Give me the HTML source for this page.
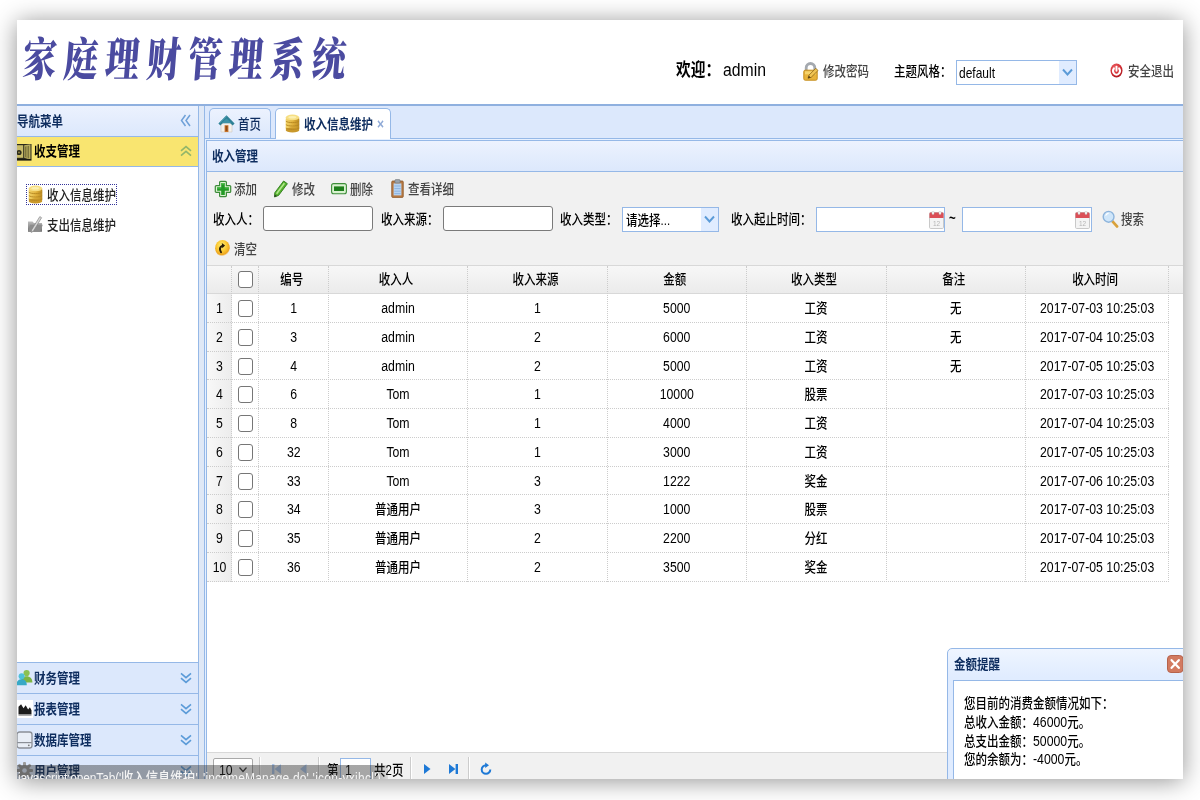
<!DOCTYPE html>
<html lang="zh-CN">
<head>
<meta charset="utf-8">
<title>家庭理财管理系统</title>
<style>
*{box-sizing:border-box;margin:0;padding:0}
html,body{width:1200px;height:800px;overflow:hidden;background:#fff}
body{font-family:"Liberation Sans","Noto Sans CJK SC",sans-serif;font-size:11.5px;color:#000;position:relative;font-weight:500}
#w{position:absolute;left:17px;top:20px;width:1166px;height:759px;overflow:hidden;background:#fff;
   box-shadow:0 2px 23px rgba(0,0,0,.43)}
#p{position:absolute;left:-17px;top:-20px;width:1200px;height:800px;will-change:transform}
.a{position:absolute;white-space:nowrap}
.t{position:absolute;white-space:nowrap;line-height:20px;height:20px;transform:scaleY(1.2)}
.b{font-weight:bold}
.nav{color:#0E2D5F;font-weight:bold}
/* title */
#title{left:23px;top:29px;font-family:"Noto Serif CJK SC","Liberation Serif",serif;font-weight:900;font-size:34px;line-height:56px;letter-spacing:7.3px;color:#4B4BA0;transform-origin:0 50%;transform:scaleY(1.36) skewX(-6deg)}
/* panels */
.hdr{background:linear-gradient(#ECF2FE,#DCE8FC);border:1px solid #95B8E7}
.acc{position:absolute;left:17px;width:182px;height:32px;background:#DCE8FC;border-top:1px solid #95B8E7;border-right:1px solid #95B8E7}
.acc .t{left:17px;top:5px;color:#0E2D5F;font-weight:bold}
.vline{position:absolute;width:1px;background:#95B8E7}
.hline{position:absolute;height:1px;background:#95B8E7}
/* table */
.th,.td{position:absolute;text-align:center;white-space:nowrap;transform:scaleY(1.2)}
.row{position:absolute;left:207px;width:962px;height:28.78px;border-bottom:1px dotted #ccc}
.row span{position:absolute;top:0;height:28px;line-height:29px;text-align:center;transform:scaleY(1.2)}
.row .n{font-size:12.3px}
.cb{position:absolute;width:15px;height:17px;border:1px solid #767676;border-radius:3px;background:#fff}
.vd{position:absolute;width:0;border-left:1px dotted #ccc}
.inp{position:absolute;background:#fff;border:1px solid #7a7a7a;border-radius:3px}
.combo{position:absolute;background:#fff;border:1px solid #95B8E7}
.l{font-size:12.3px}
.sep{position:absolute;width:0;height:25px;border-left:1px solid #ccc;border-right:1px solid #fff}
</style>
</head>
<body>
<div id="w"><div id="p">

<!-- ===== north header ===== -->
<div id="title" class="a">家庭理财管理系统</div>
<div class="t b" style="left:676px;top:60px;font-size:14.7px">欢迎：</div>
<div class="t" style="left:723px;top:60px;font-size:15.8px">admin</div>
<div class="t" style="left:823px;top:61px;font-size:11.5px;color:#444">修改密码</div>
<div class="t" style="left:894px;top:61px;font-size:11.5px">主题风格：</div>
<div class="combo" style="left:956px;top:60px;width:121px;height:25px"><div class="t" style="left:2px;top:2px;font-size:12px">default</div><div class="a" style="right:0;top:0;width:17px;height:23px;background:#E0ECFF"></div></div>
<div class="t" style="left:1128px;top:61px;font-size:11.5px;color:#444">安全退出</div>

<!-- ===== layout frame ===== -->
<div class="hline" style="left:17px;top:104px;width:1166px;height:2px;background:#8FB0DF;z-index:3"></div>

<!-- west -->
<div class="a hdr" style="left:16px;top:104px;width:183px;height:33px"><div class="t nav" style="left:0;top:6px">导航菜单</div></div>
<div class="a" style="left:17px;top:137px;width:182px;height:30px;background:#F9E570;border-right:1px solid #95B8E7;border-bottom:1px solid #95B8E7"><div class="t nav" style="left:17px;top:4px;color:#000">收支管理</div></div>
<div class="vline" style="left:198px;top:167px;height:496px"></div>
<div class="a" style="left:26px;top:184px;width:91px;height:21px;border:1px dotted #339"></div>
<div class="t" style="left:47px;top:184.5px;font-size:11.5px;color:#222">收入信息维护</div>
<div class="t" style="left:47px;top:214.5px;font-size:11.5px;color:#222">支出信息维护</div>

<div class="acc" style="top:662px"><div class="t">财务管理</div></div>
<div class="acc" style="top:693px"><div class="t">报表管理</div></div>
<div class="acc" style="top:724px"><div class="t">数据库管理</div></div>
<div class="acc" style="top:755px"><div class="t">用户管理</div></div>

<!-- split -->
<div class="a" style="left:199px;top:105px;width:5px;height:700px;background:#DFE8F6"></div>
<div class="vline" style="left:204px;top:105px;height:700px"></div>

<!-- ===== center: tabs ===== -->
<div class="a" style="left:205px;top:105px;width:981px;height:34px;background:#DCE8FC;border-bottom:1px solid #95B8E7"></div>
<div class="a" style="left:209px;top:108px;width:62px;height:30px;border:1px solid #95B8E7;border-bottom:none;border-radius:5px 5px 0 0;background:linear-gradient(#ECF2FE,#DCE8FC)"><div class="t" style="left:28px;top:5px;color:#0E2D5F">首页</div></div>
<div class="a" style="left:275px;top:108px;width:116px;height:32px;border:1px solid #95B8E7;border-bottom:none;border-radius:5px 5px 0 0;background:#fff"><div class="t nav" style="left:28px;top:5px">收入信息维护</div><div class="t b" style="left:101px;top:5px;color:#8ea9d6;font-size:12px">×</div></div>

<div class="a" style="left:205px;top:139px;width:981px;height:2px;background:#E6F0FF"></div>
<div class="a" style="left:205px;top:139px;width:1px;height:700px;background:#E6F0FF"></div>
<!-- panel header -->
<div class="a hdr" style="left:206px;top:140px;width:980px;height:32px"><div class="t nav" style="left:5px;top:5px">收入管理</div></div>
<div class="vline" style="left:206px;top:172px;height:640px"></div>

<!-- toolbar -->
<div class="a" style="left:207px;top:172px;width:976px;height:94px;background:#F1F1F1;border-bottom:1px solid #d8d8d8"></div>
<div class="t" style="left:234px;top:179px;color:#444">添加</div>
<div class="t" style="left:292px;top:179px;color:#444">修改</div>
<div class="t" style="left:350px;top:179px;color:#444">删除</div>
<div class="t" style="left:408px;top:179px;color:#444">查看详细</div>
<div class="t" style="left:213px;top:209px">收入人：</div>
<div class="inp" style="left:263px;top:206px;width:110px;height:25px"></div>
<div class="t" style="left:381px;top:209px">收入来源：</div>
<div class="inp" style="left:443px;top:206px;width:110px;height:25px"></div>
<div class="t" style="left:560px;top:209px">收入类型：</div>
<div class="combo" style="left:622px;top:207px;width:97px;height:25px"><div class="t" style="left:3px;top:2px">请选择...</div><div class="a" style="right:0;top:0;width:17px;height:23px;background:#E0ECFF"></div></div>
<div class="t" style="left:731px;top:209px">收入起止时间：</div>
<div class="combo" style="left:816px;top:207px;width:129px;height:25px"></div>
<div class="t b" style="left:949px;top:208px">~</div>
<div class="combo" style="left:962px;top:207px;width:130px;height:25px"></div>
<div class="t" style="left:1121px;top:209px;color:#444">搜索</div>
<div class="t" style="left:234px;top:239px;color:#444">清空</div>

<!-- grid header -->
<div class="a" id="gh" style="left:207px;top:266px;width:976px;height:28px;background:linear-gradient(#F7F7F7,#EBEBEB);border-bottom:1px solid #d8d8d8"></div>
<div class="a" style="left:207px;top:294px;width:25px;height:288px;background:linear-gradient(90deg,#F8F8F8,#ECECEC)"></div>

<!-- ===== grid ===== -->
<div class="th" style="left:257px;top:265px;width:69.5px;height:29px;line-height:29px">编号</div>
<div class="th" style="left:326.5px;top:265px;width:139.0px;height:29px;line-height:29px">收入人</div>
<div class="th" style="left:465.5px;top:265px;width:140.0px;height:29px;line-height:29px">收入来源</div>
<div class="th" style="left:605.5px;top:265px;width:138.5px;height:29px;line-height:29px">金额</div>
<div class="th" style="left:744px;top:265px;width:140px;height:29px;line-height:29px">收入类型</div>
<div class="th" style="left:884px;top:265px;width:139.5px;height:29px;line-height:29px">备注</div>
<div class="th" style="left:1023.5px;top:265px;width:143.25px;height:29px;line-height:29px">收入时间</div>
<div class="cb" style="left:238px;top:271px"></div>
<div class="row" style="top:294.00px"><span class="n" style="left:0;width:25px">1</span><i class="cb" style="left:31px;top:6px"></i><span class="n" style="left:52px;width:69.5px">1</span><span class="n" style="left:121.5px;width:139.0px">admin</span><span class="n" style="left:260.5px;width:140.0px">1</span><span class="n" style="left:400.5px;width:138.5px">5000</span><span class="c" style="left:539px;width:140px">工资</span><span class="c" style="left:679px;width:139.5px">无</span><span class="n" style="left:818.5px;width:143.25px">2017-07-03 10:25:03</span></div>
<div class="row" style="top:322.78px"><span class="n" style="left:0;width:25px">2</span><i class="cb" style="left:31px;top:6px"></i><span class="n" style="left:52px;width:69.5px">3</span><span class="n" style="left:121.5px;width:139.0px">admin</span><span class="n" style="left:260.5px;width:140.0px">2</span><span class="n" style="left:400.5px;width:138.5px">6000</span><span class="c" style="left:539px;width:140px">工资</span><span class="c" style="left:679px;width:139.5px">无</span><span class="n" style="left:818.5px;width:143.25px">2017-07-04 10:25:03</span></div>
<div class="row" style="top:351.56px"><span class="n" style="left:0;width:25px">3</span><i class="cb" style="left:31px;top:6px"></i><span class="n" style="left:52px;width:69.5px">4</span><span class="n" style="left:121.5px;width:139.0px">admin</span><span class="n" style="left:260.5px;width:140.0px">2</span><span class="n" style="left:400.5px;width:138.5px">5000</span><span class="c" style="left:539px;width:140px">工资</span><span class="c" style="left:679px;width:139.5px">无</span><span class="n" style="left:818.5px;width:143.25px">2017-07-05 10:25:03</span></div>
<div class="row" style="top:380.34px"><span class="n" style="left:0;width:25px">4</span><i class="cb" style="left:31px;top:6px"></i><span class="n" style="left:52px;width:69.5px">6</span><span class="n" style="left:121.5px;width:139.0px">Tom</span><span class="n" style="left:260.5px;width:140.0px">1</span><span class="n" style="left:400.5px;width:138.5px">10000</span><span class="c" style="left:539px;width:140px">股票</span><span class="n" style="left:818.5px;width:143.25px">2017-07-03 10:25:03</span></div>
<div class="row" style="top:409.12px"><span class="n" style="left:0;width:25px">5</span><i class="cb" style="left:31px;top:6px"></i><span class="n" style="left:52px;width:69.5px">8</span><span class="n" style="left:121.5px;width:139.0px">Tom</span><span class="n" style="left:260.5px;width:140.0px">1</span><span class="n" style="left:400.5px;width:138.5px">4000</span><span class="c" style="left:539px;width:140px">工资</span><span class="n" style="left:818.5px;width:143.25px">2017-07-04 10:25:03</span></div>
<div class="row" style="top:437.90px"><span class="n" style="left:0;width:25px">6</span><i class="cb" style="left:31px;top:6px"></i><span class="n" style="left:52px;width:69.5px">32</span><span class="n" style="left:121.5px;width:139.0px">Tom</span><span class="n" style="left:260.5px;width:140.0px">1</span><span class="n" style="left:400.5px;width:138.5px">3000</span><span class="c" style="left:539px;width:140px">工资</span><span class="n" style="left:818.5px;width:143.25px">2017-07-05 10:25:03</span></div>
<div class="row" style="top:466.68px"><span class="n" style="left:0;width:25px">7</span><i class="cb" style="left:31px;top:6px"></i><span class="n" style="left:52px;width:69.5px">33</span><span class="n" style="left:121.5px;width:139.0px">Tom</span><span class="n" style="left:260.5px;width:140.0px">3</span><span class="n" style="left:400.5px;width:138.5px">1222</span><span class="c" style="left:539px;width:140px">奖金</span><span class="n" style="left:818.5px;width:143.25px">2017-07-06 10:25:03</span></div>
<div class="row" style="top:495.46px"><span class="n" style="left:0;width:25px">8</span><i class="cb" style="left:31px;top:6px"></i><span class="n" style="left:52px;width:69.5px">34</span><span class="c" style="left:121.5px;width:139.0px">普通用户</span><span class="n" style="left:260.5px;width:140.0px">3</span><span class="n" style="left:400.5px;width:138.5px">1000</span><span class="c" style="left:539px;width:140px">股票</span><span class="n" style="left:818.5px;width:143.25px">2017-07-03 10:25:03</span></div>
<div class="row" style="top:524.24px"><span class="n" style="left:0;width:25px">9</span><i class="cb" style="left:31px;top:6px"></i><span class="n" style="left:52px;width:69.5px">35</span><span class="c" style="left:121.5px;width:139.0px">普通用户</span><span class="n" style="left:260.5px;width:140.0px">2</span><span class="n" style="left:400.5px;width:138.5px">2200</span><span class="c" style="left:539px;width:140px">分红</span><span class="n" style="left:818.5px;width:143.25px">2017-07-04 10:25:03</span></div>
<div class="row" style="top:553.02px"><span class="n" style="left:0;width:25px">10</span><i class="cb" style="left:31px;top:6px"></i><span class="n" style="left:52px;width:69.5px">36</span><span class="c" style="left:121.5px;width:139.0px">普通用户</span><span class="n" style="left:260.5px;width:140.0px">2</span><span class="n" style="left:400.5px;width:138.5px">3500</span><span class="c" style="left:539px;width:140px">奖金</span><span class="n" style="left:818.5px;width:143.25px">2017-07-05 10:25:03</span></div>
<div class="vd" style="left:231px;top:266px;height:316px"></div>
<div class="vd" style="left:258px;top:266px;height:316px"></div>
<div class="vd" style="left:328px;top:266px;height:316px"></div>
<div class="vd" style="left:467px;top:266px;height:316px"></div>
<div class="vd" style="left:607px;top:266px;height:316px"></div>
<div class="vd" style="left:746px;top:266px;height:316px"></div>
<div class="vd" style="left:886px;top:266px;height:316px"></div>
<div class="vd" style="left:1025px;top:266px;height:316px"></div>
<div class="vd" style="left:1168px;top:266px;height:316px"></div>
<!-- ===== icons ===== -->
<svg class="a" style="left:803px;top:62px" width="17" height="19" viewBox="0 0 17 19"><path d="M3.2 9V5.8a4.3 4.3 0 0 1 8.6 0V9" fill="none" stroke="#A4A9AF" stroke-width="2.8"/><rect x=".8" y="8.2" width="13.4" height="10" rx="1.4" fill="#E8B33A" stroke="#C58E1F"/><rect x="2" y="9.3" width="11" height="3" fill="#F6D46C"/><path d="M5 16.3l1-3.2 6.8-6.8 2.2 2.2-6.8 6.8z" fill="#F1C453" stroke="#8C6414" stroke-width=".8"/><path d="M5 16.3l.9-2.6 1.8 1.8z" fill="#4A3510"/></svg>
<svg class="a" style="left:1110px;top:63px" width="13" height="15" viewBox="0 0 13 15"><defs><radialGradient id="rg1" cx=".4" cy=".3" r=".8"><stop offset="0" stop-color="#F0666A"/><stop offset=".6" stop-color="#CF2A30"/><stop offset="1" stop-color="#9E1218"/></radialGradient></defs><ellipse cx="6.5" cy="7.5" rx="6" ry="7" fill="url(#rg1)"/><path d="M3.9 5.4a3.4 3.8 0 1 0 5.2 0" fill="none" stroke="#fff" stroke-width="2" stroke-linecap="round"/><path d="M6.5 3.6v4.2" stroke="#fff" stroke-width="1.9" stroke-linecap="round"/></svg>
<svg class="a" style="left:1062px;top:68px" width="11" height="9" viewBox="0 0 11 9"><path d="M1 1.5l4.5 5 4.5-5" fill="none" stroke="#5B9BD8" stroke-width="1.9"/></svg>
<svg class="a" style="left:704px;top:215px" width="11" height="9" viewBox="0 0 11 9"><path d="M1 1.5l4.5 5 4.5-5" fill="none" stroke="#5B9BD8" stroke-width="1.9"/></svg>
<svg class="a" style="left:180px;top:114px" width="11" height="13" viewBox="0 0 11 13"><path d="M5.5 1L1.5 6.5l4 5.5M10 1L6 6.5l4 5.5" fill="none" stroke="#6FA1D8" stroke-width="1.5"/></svg>
<svg class="a" style="left:180px;top:145px" width="12" height="12" viewBox="0 0 12 12"><path d="M1 5.8L6 1.6l5 4.2M1 10.6L6 6.4l5 4.2" fill="none" stroke="#93B66A" stroke-width="1.6"/></svg>
<svg class="a" style="left:180px;top:672px" width="12" height="12" viewBox="0 0 12 12"><path d="M1 1.4L6 5.6l5-4.2M1 6.2L6 10.4l5-4.2" fill="none" stroke="#5B9BD8" stroke-width="1.6"/></svg>
<svg class="a" style="left:180px;top:703px" width="12" height="12" viewBox="0 0 12 12"><path d="M1 1.4L6 5.6l5-4.2M1 6.2L6 10.4l5-4.2" fill="none" stroke="#5B9BD8" stroke-width="1.6"/></svg>
<svg class="a" style="left:180px;top:734px" width="12" height="12" viewBox="0 0 12 12"><path d="M1 1.4L6 5.6l5-4.2M1 6.2L6 10.4l5-4.2" fill="none" stroke="#5B9BD8" stroke-width="1.6"/></svg>
<svg class="a" style="left:180px;top:765px" width="12" height="12" viewBox="0 0 12 12"><path d="M1 1.4L6 5.6l5-4.2M1 6.2L6 10.4l5-4.2" fill="none" stroke="#5B9BD8" stroke-width="1.6"/></svg>
<svg class="a" style="left:14px;top:143px" width="18" height="18" viewBox="0 0 18 18"><rect x="0" y="1" width="17.5" height="15" fill="#2B2A1C"/><rect x="1.2" y="2.2" width="8" height="12.6" fill="#C9BC6A"/><circle cx="5" cy="9.5" r="2.6" fill="#2B2A1C"/><circle cx="5" cy="9.5" r="1" fill="#8E8446"/><path d="M10.2 2.2l6.3-1v15.6l-6.3-2z" fill="#B7AB5E"/><path d="M11.5 3.5v10.8M13 3.2v11.6M14.5 3v12.4" stroke="#6F6734" stroke-width=".8"/><rect x="0" y="16" width="17.5" height="1.6" fill="#1b1a10"/></svg>
<svg class="a" style="left:28px;top:185px" width="15" height="19" viewBox="0 0 15 19"><defs><linearGradient id="cg1" x1="0" x2="1"><stop offset="0" stop-color="#F3D56B"/><stop offset=".55" stop-color="#E0B03A"/><stop offset="1" stop-color="#B98A22"/></linearGradient></defs><rect x=".7" y="3" width="13.6" height="13.5" rx="2" fill="url(#cg1)"/><ellipse cx="7.5" cy="16" rx="6.8" ry="2.6" fill="#C9982B"/><ellipse cx="7.5" cy="3.4" rx="6.8" ry="2.8" fill="#F6DE83"/><path d="M.9 7.2c2 1.9 11.2 1.9 13.2 0M.9 10.6c2 1.9 11.2 1.9 13.2 0M.9 14c2 1.9 11.2 1.9 13.2 0" fill="none" stroke="#B58720" stroke-width=".9"/><ellipse cx="7.3" cy="3.3" rx="4" ry="1.3" fill="#FBEFB0"/></svg>
<svg class="a" style="left:285px;top:114px" width="15" height="19" viewBox="0 0 15 19"><defs><linearGradient id="cg2" x1="0" x2="1"><stop offset="0" stop-color="#F3D56B"/><stop offset=".55" stop-color="#E0B03A"/><stop offset="1" stop-color="#B98A22"/></linearGradient></defs><rect x=".7" y="3" width="13.6" height="13.5" rx="2" fill="url(#cg2)"/><ellipse cx="7.5" cy="16" rx="6.8" ry="2.6" fill="#C9982B"/><ellipse cx="7.5" cy="3.4" rx="6.8" ry="2.8" fill="#F6DE83"/><path d="M.9 7.2c2 1.9 11.2 1.9 13.2 0M.9 10.6c2 1.9 11.2 1.9 13.2 0M.9 14c2 1.9 11.2 1.9 13.2 0" fill="none" stroke="#B58720" stroke-width=".9"/><ellipse cx="7.3" cy="3.3" rx="4" ry="1.3" fill="#FBEFB0"/></svg>
<svg class="a" style="left:27px;top:215px" width="16" height="19" viewBox="0 0 16 19"><defs><linearGradient id="gf" x1="0" y1="0" x2="0" y2="1"><stop offset="0" stop-color="#BDBDBD"/><stop offset="1" stop-color="#6E6E6E"/></linearGradient></defs><path d="M1 6.5h4.5l1.4 1.6H15v8.6H1z" fill="url(#gf)"/><path d="M1 16.7l2.2-7h12.6l-2.6 7z" fill="#8d8d8d"/><path d="M4.5 15L12.8 1.6l1.8 1.1L6.4 16.2l-2.2 1.3z" fill="#d6d6d6" stroke="#777" stroke-width=".6"/></svg>
<svg class="a" style="left:16px;top:669px" width="17" height="17" viewBox="0 0 17 17"><circle cx="10.6" cy="4" r="3.1" fill="#8CC152"/><path d="M4.8 13.5c0-4.2 2.6-6.3 5.8-6.3s5.8 2.1 5.8 6.3z" fill="#7DB543"/><circle cx="5.6" cy="7.2" r="3" fill="#4FC1D9"/><path d="M.4 16.2c0-3.9 2.3-5.9 5.2-5.9s5.2 2 5.2 5.9z" fill="#37A9C6"/></svg>
<svg class="a" style="left:17px;top:700px" width="16" height="18" viewBox="0 0 16 18"><rect width="16" height="18" fill="#fff"/><path d="M1.5 14.5V6.8l2.6-2.6 2.4 4 2.2-3 2.4 4.3 1.8-2.2 1.6 3v4.2z" fill="#1c1c1c"/><rect x="1.5" y="14.8" width="13" height="1" fill="#999"/></svg>
<svg class="a" style="left:16px;top:731px" width="17" height="18" viewBox="0 0 17 18"><rect x="1" y="1" width="15" height="16" rx="2.6" fill="#E9EEF6" stroke="#8b8f96" stroke-width="1.3"/><path d="M1.2 11.6h14.6" stroke="#8b8f96" stroke-width="1.2"/><circle cx="12.8" cy="14.3" r=".9" fill="#777"/></svg>
<svg class="a" style="left:16px;top:762px" width="17" height="17" viewBox="0 0 17 17"><g fill="#9a9a9a"><circle cx="8.5" cy="8.5" r="5.4"/><rect x="7" y="0" width="3" height="17" rx="1"/><rect x="0" y="7" width="17" height="3" rx="1"/><rect x="7" y="0" width="3" height="17" rx="1" transform="rotate(45 8.5 8.5)"/><rect x="7" y="0" width="3" height="17" rx="1" transform="rotate(-45 8.5 8.5)"/></g><circle cx="8.5" cy="8.5" r="2.3" fill="#E0ECFF"/></svg>
<svg class="a" style="left:218px;top:114px" width="17" height="19" viewBox="0 0 17 19"><path d="M3 9h11v9H3z" fill="#F4F1EC" stroke="#cfc8bd" stroke-width=".6"/><path d="M6.6 11.2h3.8V18H6.6z" fill="#C9742A"/><path d="M7.6 12h1.8v5H7.6z" fill="#8E4A17"/><path d="M.4 9.4L8.5 1.2l8.1 8.2-2 2-6.1-6-6.1 6z" fill="#2F8196"/><path d="M3.4 9.2L8.5 4.4l5.1 4.8z" fill="#3D93A8"/><path d="M1.5 9.2L8.5 2.2" stroke="#57A9BD" stroke-width=".8"/></svg>
<svg class="a" style="left:214px;top:180px" width="18" height="18" viewBox="0 0 18 18"><path d="M6.6 1.3h4.8a1 1 0 0 1 1 1v3.3h3.3a1 1 0 0 1 1 1v4.8a1 1 0 0 1-1 1h-3.3v3.3a1 1 0 0 1-1 1H6.6a1 1 0 0 1-1-1v-3.3H2.3a1 1 0 0 1-1-1V6.6a1 1 0 0 1 1-1h3.3V2.3a1 1 0 0 1 1-1z" fill="#DDF3D3" stroke="#3C8B39" stroke-width="1.2"/><path d="M7.2 3.1h3.6v4.1h4.1v3.6h-4.1v4.1H7.2v-4.1H3.1V7.2h4.1z" fill="#239A25"/><path d="M7.2 3.1h3.6v1.4H7.2zM3.1 7.2h4.1v1.2H3.1zM10.8 7.2h4.1v1.2h-4.1z" fill="#4FBE4C"/></svg>
<svg class="a" style="left:273px;top:180px" width="16" height="18" viewBox="0 0 16 18"><path d="M10.6 1l3.8 2.7L5.6 15.4 1.5 17l.3-4.3z" fill="#55B22E" stroke="#2F7A1B" stroke-width=".9" stroke-linejoin="round"/><path d="M11.4 3.2L3.6 13.8" stroke="#B4E88F" stroke-width="1.5"/><path d="M1.5 17l.25-2.4 2 1.4z" fill="#333"/></svg>
<svg class="a" style="left:331px;top:183px" width="16" height="12" viewBox="0 0 16 12"><rect x=".6" y=".6" width="14.8" height="10.2" rx="2" fill="#D9F2D0" stroke="#3E8E3A" stroke-width="1.1"/><rect x="3" y="3.4" width="10" height="4.6" fill="#1E7F1C"/></svg>
<svg class="a" style="left:390.5px;top:179px" width="13" height="19" viewBox="0 0 14 19" preserveAspectRatio="none"><rect x=".8" y="2" width="12.4" height="16.4" rx="1" fill="#B97A42" stroke="#8A5526" stroke-width=".8"/><rect x="2.8" y="4.4" width="8.4" height="12" fill="#B6D3F2"/><path d="M3.6 7h6.8M3.6 9.6h6.8M3.6 12.2h6.8M3.6 14.6h6.8" stroke="#7FA9D9" stroke-width=".8"/><rect x="4.2" y=".6" width="5.6" height="3.4" rx="1" fill="#9CA3AA" stroke="#6b7278" stroke-width=".6"/></svg>
<svg class="a" style="left:214px;top:239px" width="17" height="19" viewBox="0 0 17 19"><defs><radialGradient id="og" cx=".45" cy=".35" r=".62"><stop offset="0" stop-color="#FFF27E"/><stop offset=".55" stop-color="#FBC832"/><stop offset=".85" stop-color="#EDA520"/><stop offset="1" stop-color="#EDA520" stop-opacity="0"/></radialGradient></defs><ellipse cx="8.5" cy="9.3" rx="7.4" ry="8.4" fill="url(#og)"/><path d="M7 13.2C5.2 10.6 5.6 7.6 8.6 6.8" fill="none" stroke="#2a1d08" stroke-width="2" stroke-linecap="round"/><path d="M7.8 4.1l3.3 2.3-2.8 2.8z" fill="#2a1d08"/></svg>
<svg class="a" style="left:928.5px;top:211px" width="15" height="18" viewBox="0 0 15 18"><rect x=".5" y="1.5" width="14" height="16" rx="1.2" fill="#F4F4F4" stroke="#C9C9C9"/><path d="M.5 2.7a1.2 1.2 0 0 1 1.2-1.2h11.6a1.2 1.2 0 0 1 1.2 1.2V7H.5z" fill="#DB4F57"/><rect x="3" y="0" width="2" height="3.6" rx="1" fill="#fff" stroke="#b9b9b9" stroke-width=".5"/><rect x="10" y="0" width="2" height="3.6" rx="1" fill="#fff" stroke="#b9b9b9" stroke-width=".5"/><text x="7.5" y="14.6" font-family="Liberation Sans,sans-serif" font-size="6.5" fill="#b5b5b5" text-anchor="middle">12</text></svg>
<svg class="a" style="left:1075px;top:211px" width="15" height="18" viewBox="0 0 15 18"><rect x=".5" y="1.5" width="14" height="16" rx="1.2" fill="#F4F4F4" stroke="#C9C9C9"/><path d="M.5 2.7a1.2 1.2 0 0 1 1.2-1.2h11.6a1.2 1.2 0 0 1 1.2 1.2V7H.5z" fill="#DB4F57"/><rect x="3" y="0" width="2" height="3.6" rx="1" fill="#fff" stroke="#b9b9b9" stroke-width=".5"/><rect x="10" y="0" width="2" height="3.6" rx="1" fill="#fff" stroke="#b9b9b9" stroke-width=".5"/><text x="7.5" y="14.6" font-family="Liberation Sans,sans-serif" font-size="6.5" fill="#b5b5b5" text-anchor="middle">12</text></svg>
<svg class="a" style="left:1102px;top:210px" width="17" height="18" viewBox="0 0 17 18"><path d="M9.6 10.4l5.4 6" stroke="#D9A13A" stroke-width="2.8" stroke-linecap="round"/><circle cx="6.6" cy="6.8" r="5.4" fill="#CFE6FA" stroke="#8DB4DC" stroke-width="1.4"/><path d="M3.6 5.6a3.4 3.4 0 0 1 3-2.2" stroke="#fff" stroke-width="1.2" fill="none"/></svg>
<!-- ===== pager ===== -->
<div class="a" style="left:207px;top:752px;width:976px;height:40px;background:#F1F1F1;border-top:1px solid #d8d8d8"></div>
<div class="a" style="left:213px;top:758px;width:40px;height:24px;background:#fff;border:1px solid #a9a9a9;border-radius:2px"><div class="t" style="left:5px;top:1px;font-size:12.3px">10</div>
<svg class="a" style="left:24px;top:7px" width="10" height="8" viewBox="0 0 10 8"><path d="M1.5 1.5 L5 5.5 L8.5 1.5" fill="none" stroke="#333" stroke-width="1.2"/></svg></div>
<div class="sep" style="left:259px;top:757px"></div>
<svg class="a" style="left:271px;top:763px" width="11" height="12" viewBox="0 0 11 12"><path d="M1 1h2.4v10H1zM10 1v10L3.6 6z" fill="#A9C4E8"/></svg>
<svg class="a" style="left:298px;top:763px" width="10" height="12" viewBox="0 0 10 12"><path d="M8.5 1v10L2 6z" fill="#A9C4E8"/></svg>
<div class="sep" style="left:318px;top:757px"></div>
<div class="t" style="left:327px;top:760px">第</div>
<div class="a" style="left:340px;top:758px;width:31px;height:24px;background:#fff;border:1px solid #95B8E7"><div class="t" style="left:4px;top:1px;font-size:12.3px">1</div></div>
<div class="t" style="left:374px;top:760px">共2页</div>
<div class="sep" style="left:410px;top:757px"></div>
<svg class="a" style="left:422px;top:763px" width="10" height="12" viewBox="0 0 10 12"><path d="M2 1v10L8.5 6z" fill="#1E79D6"/></svg>
<svg class="a" style="left:448px;top:763px" width="11" height="12" viewBox="0 0 11 12"><path d="M7.6 1H10v10H7.6zM1 1v10L7.4 6z" fill="#1E79D6"/></svg>
<div class="sep" style="left:468px;top:757px"></div>
<svg class="a" style="left:479px;top:762px" width="14" height="14" viewBox="0 0 14 14"><path d="M7 3.2A4.3 4.3 0 1 0 11.3 7.5" fill="none" stroke="#1E79D6" stroke-width="2"/><path d="M6.2 0.4 L10 3.2 L6.2 6z" fill="#1E79D6"/></svg>

<!-- ===== popup window ===== -->
<div class="a" style="left:947px;top:648px;width:260px;height:160px;border:1px solid #95B8E7;border-radius:5px;background:linear-gradient(#EFF5FF 0,#E0ECFF 28px)"></div>
<div class="t nav" style="left:954px;top:654px">金额提醒</div>
<div class="a" style="left:953px;top:680px;width:250px;height:120px;background:#fff;border:1px solid #95B8E7"></div>
<div class="t" style="left:964px;top:692.5px">您目前的消费金额情况如下：</div>
<div class="t" style="left:964px;top:711.5px">总收入金额：<span class="l">46000</span>元。</div>
<div class="t" style="left:964px;top:730.5px">总支出金额：<span class="l">50000</span>元。</div>
<div class="t" style="left:964px;top:749px">您的余额为：<span class="l">-4000</span>元。</div>
<svg class="a" style="left:1167px;top:655px" width="18" height="18" viewBox="0 0 18 18"><rect x="0.5" y="0.5" width="15.5" height="17" rx="3.5" fill="#D27A60" stroke="#B6634C"/><path d="M4.6 5.2 L11.8 12.8 M11.8 5.2 L4.6 12.8" stroke="#fff" stroke-width="2.3" stroke-linecap="round"/></svg>

<!-- ===== browser status bubble ===== -->
<div class="a" style="left:17px;top:765px;width:371px;height:20px;background:linear-gradient(90deg,rgba(50,50,50,.43) 0,rgba(50,50,50,.43) 355px,rgba(50,50,50,.12) 371px);overflow:hidden;font-size:12px;color:#f4f4f4"><span class="t" style="left:1px;top:3px;letter-spacing:-.16px">javascript:openTab('</span><span class="t" style="left:104px;top:3px;font-size:12.33px">收入信息维护</span><span class="t" style="left:178.5px;top:3px">',</span><span class="t" style="left:186px;top:3px;letter-spacing:.16px">'incomeManage.do',</span><span class="t" style="left:295.6px;top:3px;letter-spacing:.27px">'icon-yxjhcl')</span></div>

</div></div>
</body>
</html>
